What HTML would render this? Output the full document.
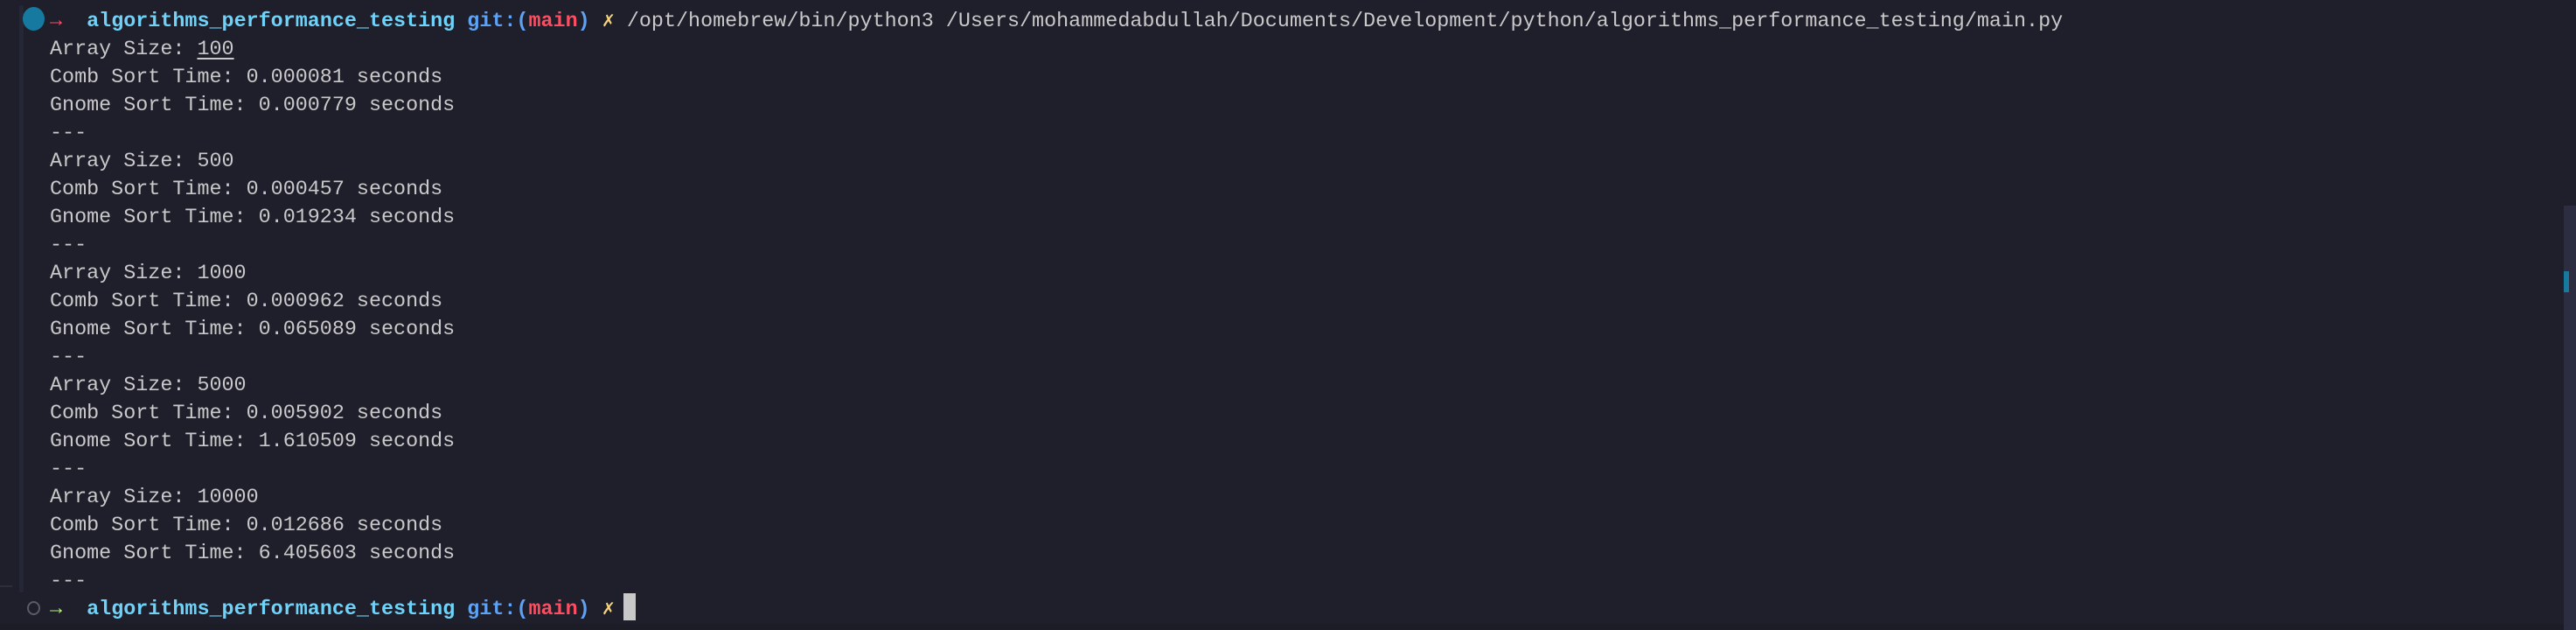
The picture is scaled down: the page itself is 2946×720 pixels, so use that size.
<!DOCTYPE html>
<html><head><meta charset="utf-8"><style>
html,body{margin:0;padding:0;overflow:hidden;}
body{width:2946px;height:720px;background:#1e1f2b;position:relative;}
.bar{position:absolute;left:22px;top:6px;width:5px;height:671px;background:#252737;border-radius:2px;}
.t{position:absolute;left:57px;top:9px;font-family:"Liberation Mono","DejaVu Sans Mono",monospace;font-size:23.4px;color:#c9c9c9;white-space:normal;}
.t div{height:32px;line-height:32px;overflow:visible;white-space:pre;}
.b{font-weight:bold}
.c{color:#6fd3f9}.g{color:#5ea2f5}.r{color:#ff4d60}.y{color:#f6d27c}.gr{color:#b6f07c}
.u{text-decoration:underline;text-underline-offset:4px}
.dot{position:absolute;left:26px;top:8px;width:25px;height:27px;border-radius:50%;background:#167aa0;}
.o{position:absolute;left:31px;top:687px;width:11px;height:12px;border:2.5px solid #5a5b66;border-radius:50%;}
.cur{position:absolute;left:713px;top:678px;width:14px;height:31px;background:#c8c8c8;}
.sb{position:absolute;left:2932px;top:235px;width:14px;height:485px;background:#2c2d40;}
.th{position:absolute;left:2932px;top:310px;width:6px;height:24px;background:#17799e;}
.hl{position:absolute;left:0;top:669px;width:14px;height:2px;background:#2d2e3c;}
.bl{position:absolute;left:0;top:713px;width:2946px;height:7px;background:#1b1c26;}
</style></head><body>
<div class="bar"></div><div class="hl"></div><div class="bl"></div>
<div class="dot"></div>
<div class="o"></div>
<div class="sb"></div><div class="th"></div>
<div class="t"><div><span class="r b">→</span>  <span class="c b">algorithms_performance_testing</span> <span class="g b">git:(</span><span class="r b">main</span><span class="g b">)</span> <span class="y b">✗</span> /opt/homebrew/bin/python3 /Users/mohammedabdullah/Documents/Development/python/algorithms_performance_testing/main.py</div><div>Array Size: <span class="u">100</span></div><div>Comb Sort Time: 0.000081 seconds</div><div>Gnome Sort Time: 0.000779 seconds</div><div>---</div><div>Array Size: 500</div><div>Comb Sort Time: 0.000457 seconds</div><div>Gnome Sort Time: 0.019234 seconds</div><div>---</div><div>Array Size: 1000</div><div>Comb Sort Time: 0.000962 seconds</div><div>Gnome Sort Time: 0.065089 seconds</div><div>---</div><div>Array Size: 5000</div><div>Comb Sort Time: 0.005902 seconds</div><div>Gnome Sort Time: 1.610509 seconds</div><div>---</div><div>Array Size: 10000</div><div>Comb Sort Time: 0.012686 seconds</div><div>Gnome Sort Time: 6.405603 seconds</div><div>---</div><div><span class="gr b">→</span>  <span class="c b">algorithms_performance_testing</span> <span class="g b">git:(</span><span class="r b">main</span><span class="g b">)</span> <span class="y b">✗</span></div></div>
<div class="cur"></div>
</body></html>
